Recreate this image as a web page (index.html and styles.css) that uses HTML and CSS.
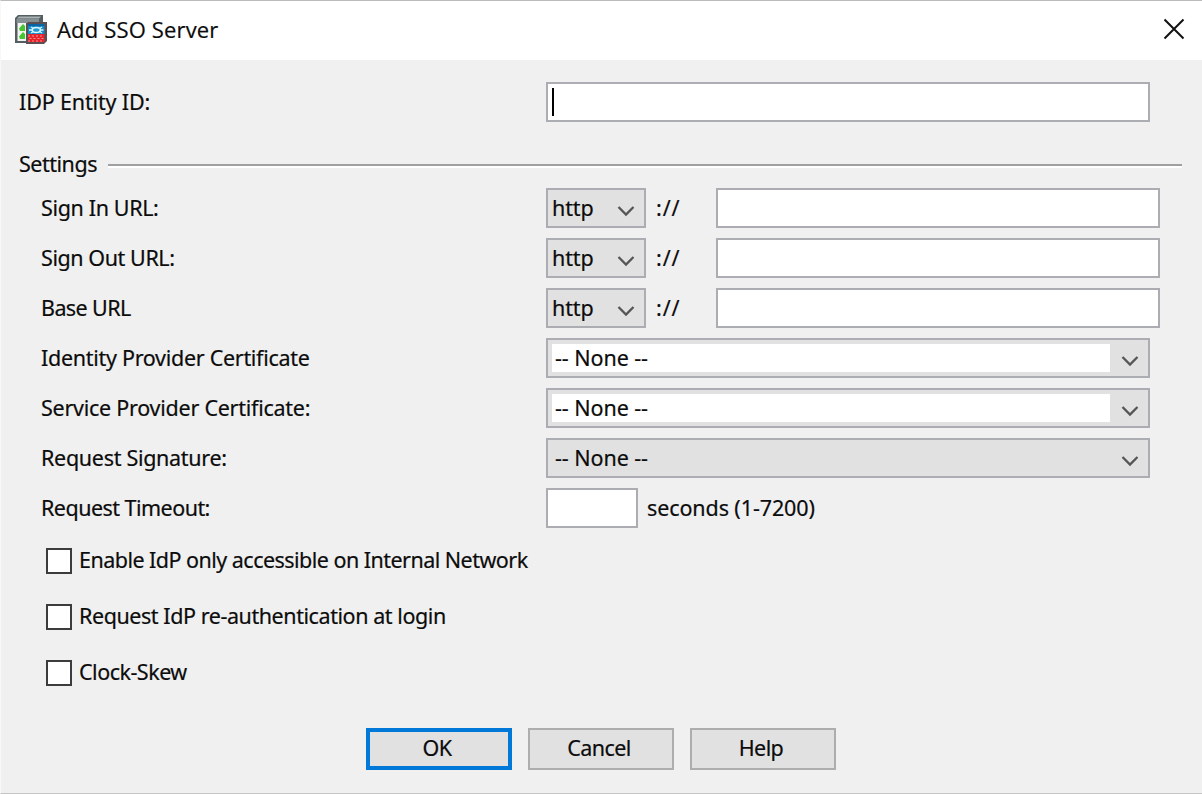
FILE: index.html
```html
<!DOCTYPE html>
<html lang="en">
<head>
<meta charset="utf-8">
<title>Add SSO Server</title>
<link rel="stylesheet" href="styles.css">
</head>
<body>
<svg class="defs" width="0" height="0" aria-hidden="true">
  <symbol id="chevron" viewBox="0 0 18 12"><path d="M1.5 2 L9 9.5 L16.5 2" fill="none" stroke="#555" stroke-width="2.3"/></symbol>
</svg>
<main class="dialog">
  <header class="titlebar">
    <svg class="app-icon" viewBox="0 0 34 32" width="34" height="32">
      <path d="M1 4 L4 1 H29 V9 L25 12 H22 V29 H1Z" fill="#555e60"/>
      <path d="M3 4.5 L5 2.5 H27 L25 4.5Z" fill="#a9b2b4"/>
      <path d="M2.500 5 H25 V9 H2.500Z" fill="#879193"/>
      <path d="M3.500 9 H12 V27 H3.500Z" fill="#f1f4f1"/>
      <path d="M5 14.500 L9 10 L11 12 V17 H6Z M5 22.500 L9 18 L11 20 V25 H6Z" fill="#45c52f"/>
      <path d="M12 10 L14 8 H33 V27 L30 30 H12Z" fill="#5a5054"/>
      <path d="M14 10 H30.500 V20 H14Z" fill="#1688c5"/>
      <path d="M14 10 H30.500 V12 H14Z" fill="#0765a5"/>
      <path d="M14 20 H30.500 V28 H14Z" fill="#e6222d"/>
      <path d="M14 22 H30 M15.500 24.500 H30 M14 27 H30" stroke="#ff8b88" stroke-width="1" stroke-dasharray="2 2"/>
      <path d="M15 16 H18 M26 16 H29.500 M17 13 L20 15 M28 13 L25 15 M17 19 L20 17 M28 19 L25 17" stroke="#d5f6ff" stroke-width="1.400"/>
      <ellipse cx="22.300" cy="16" rx="4" ry="2.500" fill="#2298d4" stroke="#d5f6ff" stroke-width="1.500"/>
    </svg>
    <h1 class="title">Add SSO Server</h1>
    <svg class="close" viewBox="0 0 22 22" width="22" height="22"><path d="M1.5 1.5 L20.5 20.5 M20.5 1.5 L1.5 20.5" stroke="#111" stroke-width="2"/></svg>
  </header>
  <section class="entity">
    <span class="label entity-label">IDP Entity ID:</span>
    <div class="field field-long"><span class="caret"></span></div>
  </section>
  <div class="section-head"><span class="settings-label">Settings</span><span class="rule"></span></div>
  <section class="rows">
    <div class="row"><span class="label sign-in">Sign In URL:</span><div class="select scheme"><span>http</span><svg class="chev"><use href="#chevron"/></svg></div><span class="sep">://</span><div class="field url"></div></div>
    <div class="row"><span class="label sign-out">Sign Out URL:</span><div class="select scheme"><span>http</span><svg class="chev"><use href="#chevron"/></svg></div><span class="sep">://</span><div class="field url"></div></div>
    <div class="row"><span class="label base">Base URL</span><div class="select scheme"><span>http</span><svg class="chev"><use href="#chevron"/></svg></div><span class="sep">://</span><div class="field url"></div></div>
    <div class="row"><span class="label idp-cert">Identity Provider Certificate</span><div class="select wide"><span class="value editable">-- None --</span><svg class="chev"><use href="#chevron"/></svg></div></div>
    <div class="row"><span class="label sp-cert">Service Provider Certificate:</span><div class="select wide"><span class="value editable">-- None --</span><svg class="chev"><use href="#chevron"/></svg></div></div>
    <div class="row"><span class="label signature">Request Signature:</span><div class="select wide"><span class="value">-- None --</span><svg class="chev"><use href="#chevron"/></svg></div></div>
    <div class="row"><span class="label timeout">Request Timeout:</span><div class="field short"></div><span class="unit">seconds (1-7200)</span></div>
  </section>
  <section class="checks">
    <div class="check"><span class="box"></span><span class="check-text internal">Enable IdP only accessible on Internal Network</span></div>
    <div class="check"><span class="box"></span><span class="check-text reauth">Request IdP re-authentication at login</span></div>
    <div class="check"><span class="box"></span><span class="check-text skew">Clock-Skew</span></div>
  </section>
  <footer class="buttons">
    <div class="button primary"><span>OK</span></div>
    <div class="button"><span>Cancel</span></div>
    <div class="button"><span>Help</span></div>
  </footer>
</main>
</body>
</html>
```
FILE: styles.css
```css
* { box-sizing: border-box; }
body { margin: 0; background: #f0f0f0; font-family: "Noto Sans", sans-serif; font-size: 21.5px; line-height: 30px; letter-spacing: -0.6px; color: #0c0c0c; -webkit-text-stroke: 0.2px #0c0c0c; }
.defs { display: block; }
.dialog { width: 1202px; height: 794px; display: flex; flex-direction: column; background: #f0f0f0; border-top: 1px solid #bbb; border-bottom: 1px solid #c6c6c6; border-left: 1px solid #f8f8f8; overflow: hidden; white-space: nowrap; }
.titlebar { height: 59px; flex: none; display: flex; align-items: center; background: #fff; padding: 0 17px 0 12px; }
.app-icon { margin: -1px 0 0 1px; }
.title { margin: -4px auto 0 9px; font: 400 22px/30px "Open Sans", sans-serif; letter-spacing: 0.16px; }
.close { margin-top: -4px; }
.entity { display: flex; align-items: center; height: 40px; margin-top: 22px; padding-left: 18px; }
.label { width: 505px; flex: none; }
.entity-label { width: 527px; letter-spacing: -0.15px; }
.sign-in { letter-spacing: -0.35px; }
.sign-out { letter-spacing: -0.42px; }
.idp-cert { letter-spacing: -0.29px; }
.sp-cert { letter-spacing: -0.25px; }
.signature { letter-spacing: -0.3px; }
.timeout { letter-spacing: -0.53px; }
.field { height: 40px; background: #fff; border: 2px solid #abadb3; }
.field-long { width: 604px; padding: 4px; }
.caret { display: block; width: 2px; height: 28px; background: #000; }
.section-head { display: flex; align-items: center; height: 30px; margin-top: 27px; padding: 0 20px 0 18px; }
.settings-label { width: 89px; flex: none; letter-spacing: -0.48px; }
.rule { flex: 1; height: 4px; border-top: 2px solid #a0a0a0; background: #fff; margin-top: 4px; }
.rows { display: flex; flex-direction: column; gap: 10px; margin-top: 9px; padding-left: 40px; }
.row { display: flex; align-items: center; height: 40px; }
.select { display: flex; align-items: center; justify-content: space-between; height: 40px; border: 2px solid #abadb3; background: #e1e1e1; }
.scheme { width: 100px; padding: 0 9px 0 4px; letter-spacing: -0.1px; }
.wide { width: 604px; padding: 0 9px 0 4px; }
.chev { width: 18px; height: 12px; margin-top: 6px; flex: none; }
.value { width: 558px; height: 28px; line-height: 28px; padding-left: 3px; letter-spacing: -0.07px; }
.editable { background: #fff; }
.sep { width: 70px; padding-left: 10px; letter-spacing: 0.9px; }
.url { width: 444px; }
.short { width: 92px; }
.unit { margin-left: 9px; letter-spacing: -0.1px; }
.checks { display: flex; flex-direction: column; gap: 26px; margin-top: 18px; padding-left: 45px; }
.check { display: flex; align-items: center; height: 30px; gap: 7px; }
.check-text { margin-top: -2px; }
.internal { letter-spacing: -0.53px; }
.reauth { letter-spacing: -0.43px; }
.skew { letter-spacing: -0.5px; }
.box { width: 26px; height: 26px; border: 2px solid #3c3c3c; background: #fff; }
.buttons { display: flex; gap: 16px; margin-top: 40px; padding-left: 365px; }
.button { width: 146px; height: 42px; display: flex; align-items: center; justify-content: center; padding: 0 4px 2px 0; border: 2px solid #adadad; background: #e1e1e1; }
.primary { border: 4px solid #0078d7; }
```
